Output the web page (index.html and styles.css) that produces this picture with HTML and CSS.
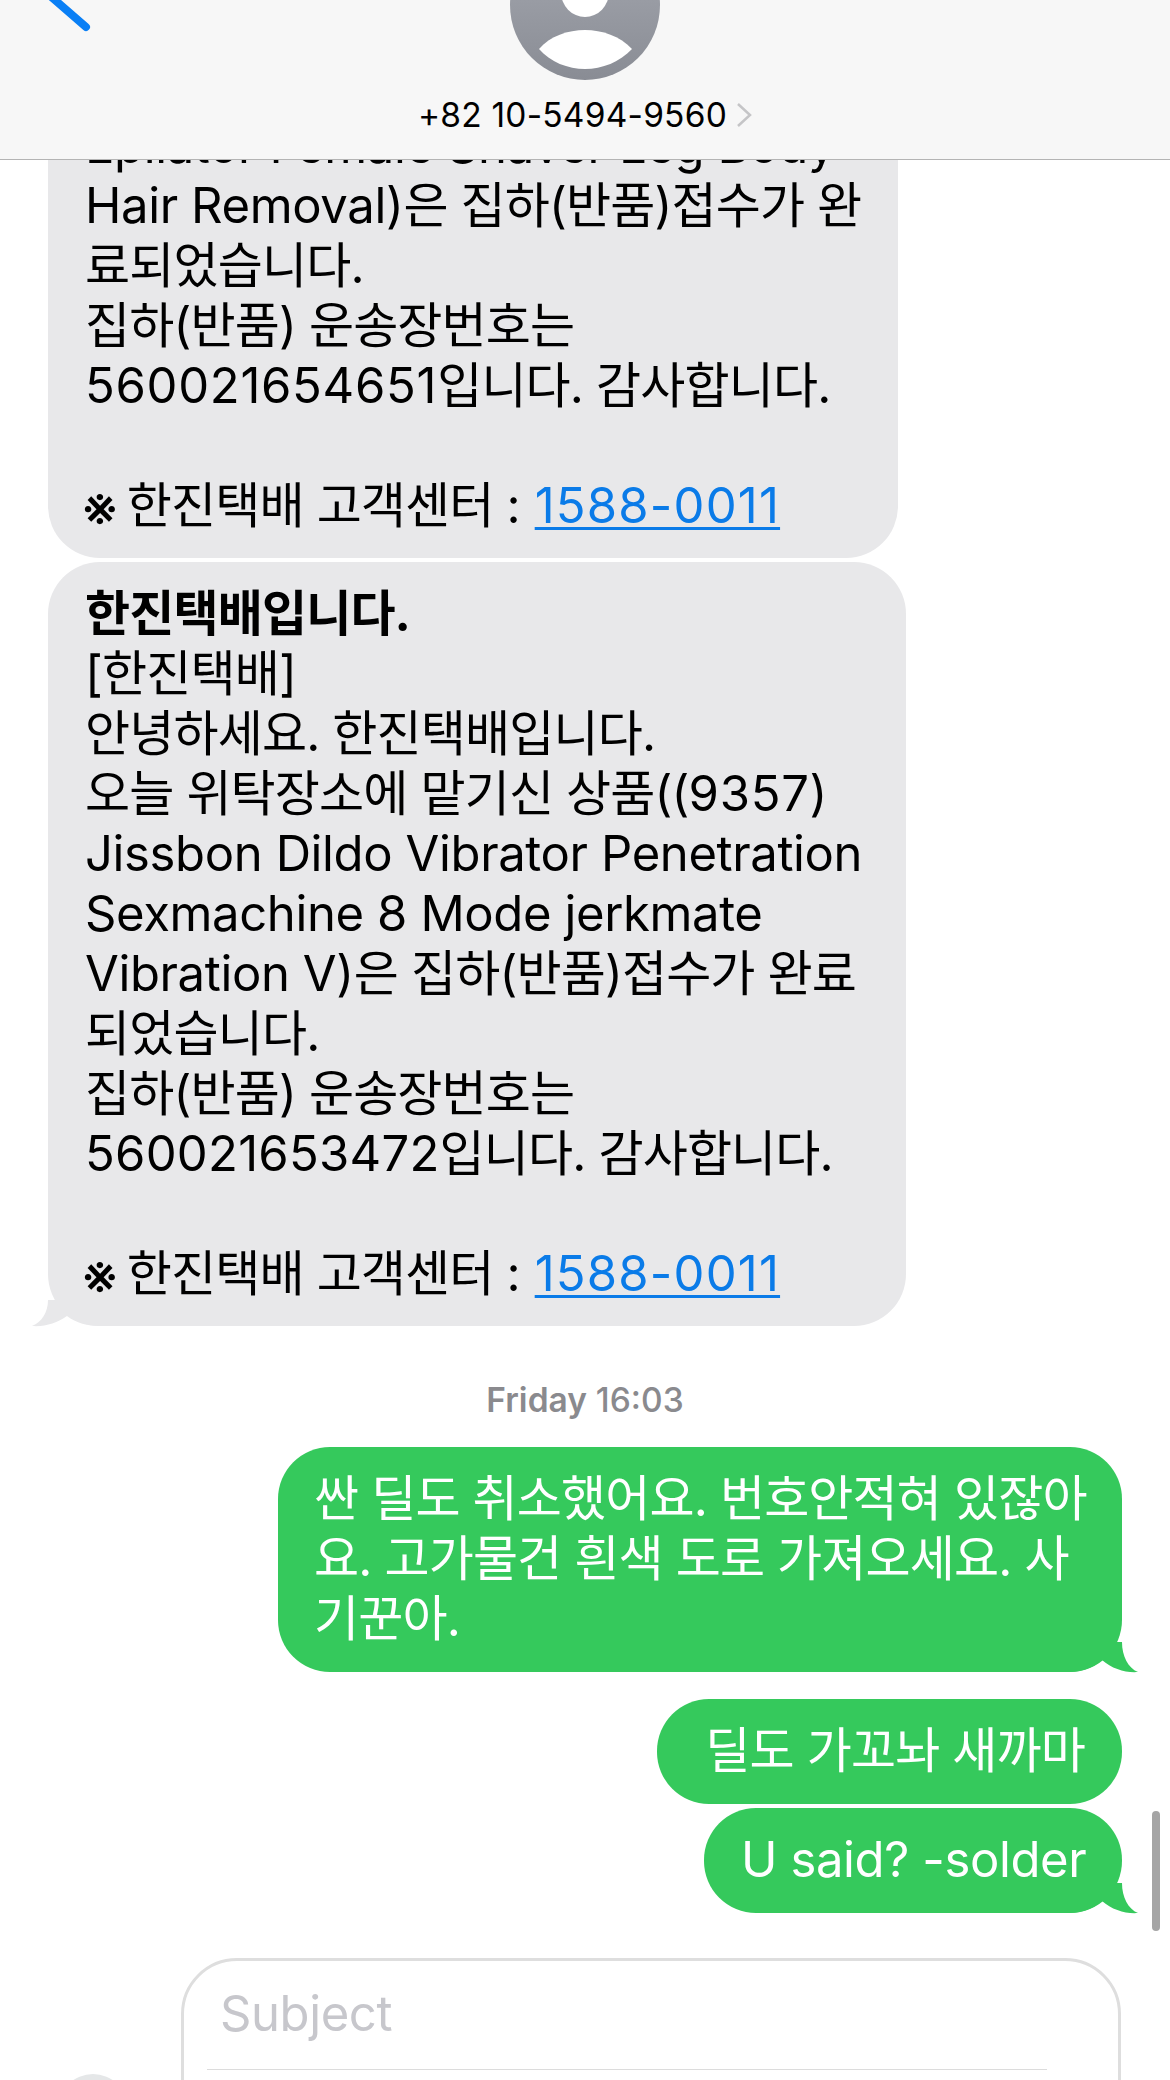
FILE: index.html
```html
<!DOCTYPE html>
<html lang="ko">
<head>
<meta charset="utf-8">
<title>Messages</title>
<link rel="stylesheet" href="styles.css">
</head>
<body>
<main class="screen">
  <section class="thread">
    <div class="bubble in b1"><span class="lat">Epilator Female Shaver Leg Body</span><br><span class="lat">Hair Removal)</span>은 집하(반품)접수가 완<br>료되었습니다.<br>집하(반품) 운송장번호는<br><span class="num">560021654651</span>입니다. 감사합니다.<br><br><span class="ref">※</span> 한진택배 고객센터 : <a class="link">1588-0011</a></div>
    <div class="bubble in b2"><strong>한진택배입니다.</strong><br>[한진택배]<br>안녕하세요. 한진택배입니다.<br>오늘 위탁장소에 맡기신 상품((<span class="num">9357</span>)<br><span class="lat">Jissbon Dildo Vibrator Penetration</span><br><span class="lat">Sexmachine 8 Mode jerkmate</span><br><span class="lat">Vibration V)</span>은 집하(반품)접수가 완료<br>되었습니다.<br>집하(반품) 운송장번호는<br><span class="num-tight">560021653472</span>입니다. 감사합니다.<br><br><span class="ref">※</span> 한진택배 고객센터 : <a class="link">1588-0011</a>
      <svg class="tail tail-in" viewBox="0 0 68 27"><path d="M16 0C16 12 10 22 0 26C13 27 25 23 35 16C44 23 56 26 68 26V0Z"/></svg>
    </div>
    <div class="stamp"><b>Friday</b> 16:03</div>
    <div class="bubble out b3">싼 딜도 취소했어요. 번호안적혀 있잖아<br>요. 고가물건 흰색 도로 가져오세요. 사<br>기꾼아.
      <svg class="tail tail-out" viewBox="0 0 70 31"><path d="M53 0C53 14 59 26 69 30C57 31 43 27 33 18C24 26 12 30 0 30V0Z"/></svg>
    </div>
    <div class="bubble out b4">딜도 가꼬놔 새까마</div>
    <div class="bubble out b5"><span class="lat">U said? -solder</span>
      <svg class="tail tail-out" viewBox="0 0 70 31"><path d="M53 0C53 14 59 26 69 30C57 31 43 27 33 18C24 26 12 30 0 30V0Z"/></svg>
    </div>
    <div class="composer-row">
      <div class="plus"></div>
      <div class="composer">
        <div class="subject">Subject</div>
        <div class="rule"></div>
      </div>
    </div>
  </section>
  <div class="scrollbar"></div>
  <header class="topbar">
    <svg class="back" viewBox="0 0 44 36"><path d="M0 -6L38 27" /></svg>
    <svg class="avatar" viewBox="0 0 150 80">
      <defs><linearGradient id="g" x1="0" y1="0" x2="0" y2="1"><stop offset="0" stop-color="#a7aab2"/><stop offset="1" stop-color="#898c94"/></linearGradient></defs>
      <circle cx="75" cy="5" r="75" fill="url(#g)"/>
      <ellipse cx="75" cy="-8" rx="24" ry="25" fill="#fff"/>
      <path d="M29 49C40 36 58 30 75 30C92 30 110 36 122 49C110 62 92 69 75 69C58 69 40 62 29 49Z" fill="#fff"/>
    </svg>
    <div class="contact"><span>+82 10-5494-9560</span>
      <svg class="chev" viewBox="0 0 16 24"><path d="M2 1L14 12L2 23"/></svg>
    </div>
  </header>
</main>
</body>
</html>
```
FILE: styles.css
```css
* { box-sizing: border-box; }
html, body { margin: 0; padding: 0; background: #fff; }
.screen {
  position: relative;
  width: 1170px;
  height: 2080px;
  overflow: hidden;
  font-family: Inter, "Noto Sans CJK KR", "Liberation Sans", sans-serif;
  color: #000;
}
.thread {
  display: flex;
  flex-direction: column;
  padding-top: 94px;
}
.bubble {
  position: relative;
  font-size: 49px;
  line-height: 60px;
  letter-spacing: -0.85px;
  padding: 22px 37px;
  border-radius: 52px;
  white-space: nowrap;
}
.bubble strong { font-weight: 700; }
.lat { letter-spacing: -0.38px; }
.num { letter-spacing: 0.7px; }
.num-tight { letter-spacing: 0.25px; }
.ref { display: inline-block; letter-spacing: -2.5px; transform: translate(-1px, 3px) scale(1.14); }
.in { background: #e8e8ea; margin-left: 48px; }
.out { background: #35c95c; color: #fff; align-self: flex-end; margin-right: 48px; }
.b1 { width: 850px; height: 464px; }
.b2 { width: 858px; height: 764px; margin-top: 4px; }
.b3 { width: 844px; height: 225px; padding-left: 36px; }
.b4 { width: 465px; height: 105px; margin-top: 27px; text-align: right; }
.b5 { width: 418px; height: 105px; margin-top: 4px; }
.link { color: #0a7be8; margin-left: 2px; letter-spacing: 1.2px; text-decoration: underline; text-decoration-thickness: 3px; text-underline-offset: 4px; }
.tail { position: absolute; display: block; }
.tail-in { left: -16px; bottom: -1px; width: 68px; height: 27px; fill: #e8e8ea; }
.tail-out { right: -17px; bottom: -1px; width: 70px; height: 31px; fill: #35c95c; }
.stamp {
  margin: 53px 0 26px;
  height: 42px;
  line-height: 42px;
  text-align: center;
  font-size: 33.5px;
  color: #8a8a8e;
  font-weight: 500;
}
.stamp b { font-weight: 600; }
.composer-row {
  display: flex;
  align-items: flex-start;
  margin-top: 45px;
}
.plus {
  width: 70px;
  height: 70px;
  margin: 116px 53px 0 58px;
  border-radius: 50%;
  background: #e5e7e8;
}
.composer {
  width: 940px;
  height: 200px;
  padding: 25px 0 0 36px;
  border: 3px solid #dedede;
  border-radius: 56px;
}
.subject {
  font-size: 49px;
  line-height: 56px;
  letter-spacing: -0.4px;
  color: #c7c7cc;
}
.rule {
  height: 1px;
  width: 840px;
  margin: 27px 0 0 -13px;
  background: #dcdcdc;
}
.scrollbar {
  position: absolute;
  left: 1152px;
  top: 1811px;
  width: 8px;
  height: 120px;
  border-radius: 4px;
  background: #a5a5a5;
}
.topbar {
  position: absolute;
  top: 0;
  left: 0;
  width: 100%;
  height: 160px;
  display: flex;
  flex-direction: column;
  align-items: center;
  background: #f7f7f7;
  border-bottom: 1px solid #b4b4b4;
}
.back {
  position: absolute;
  left: 48px;
  top: 0;
  width: 44px;
  height: 36px;
  overflow: hidden;
  fill: none;
  stroke: #0a7ff5;
  stroke-width: 8;
  stroke-linecap: round;
}
.avatar { display: block; width: 150px; height: 80px; }
.contact {
  display: flex;
  align-items: center;
  gap: 9px;
  margin-top: 15px;
  font-size: 33.5px;
  line-height: 40px;
  letter-spacing: 0.2px;
}
.chev { width: 16px; height: 24px; fill: none; stroke: #c5c5c7; stroke-width: 2.5; }
```
